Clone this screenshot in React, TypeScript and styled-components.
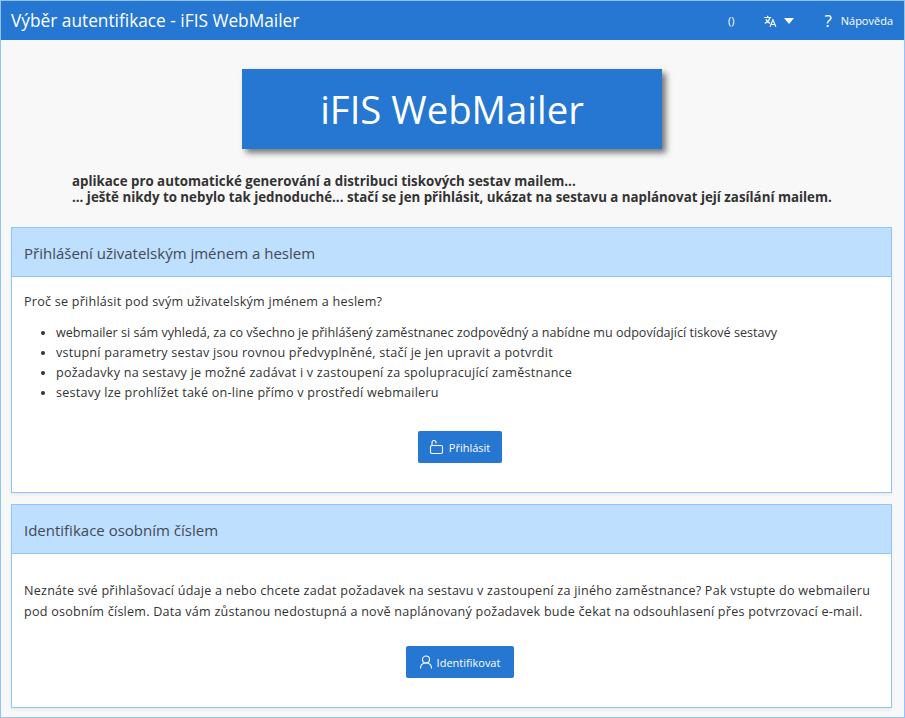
import * as React from "react";
import styled, { createGlobalStyle } from "styled-components";

const Global = createGlobalStyle`
  html, body {
    margin: 0;
    padding: 0;
    background: #f8f8f8;
  }
  * {
    box-sizing: border-box;
  }
`;

const Frame = styled.div`
  width: 905px;
  height: 718px;
  overflow: hidden;
  border: 1px solid #90c4fd;
  background: #f8f8f8;
  font-family: "Open Sans", "Noto Sans", sans-serif;
  color: #333;
`;

const TopBar = styled.div`
  height: 39px;
  background: #2577d2;
  color: #fff;
  display: flex;
  align-items: center;
  padding: 0 11px 0 10px;
`;

const BarTitle = styled.div`
  font-size: 17.3px;
  flex: 1;
`;

const BarItem = styled.div<{ $gap?: number; $inner?: number }>`
  display: flex;
  align-items: center;
  gap: ${(p) => p.$inner ?? 7}px;
  font-size: 11px;
  margin-left: ${(p) => p.$gap ?? 0}px;
`;

const HelpMark = styled.span`
  font-size: 17px;
  line-height: 20px;
`;

const Caret = styled.span`
  width: 0;
  height: 0;
  border-left: 5px solid transparent;
  border-right: 5px solid transparent;
  border-top: 6px solid #fff;
`;

const Banner = styled.div`
  width: 420px;
  height: 80px;
  margin: 29px 0 0 241px;
  background: #2577d2;
  color: #fff;
  font-size: 38.3px;
  display: flex;
  align-items: center;
  justify-content: center;
  box-shadow: 4px 4px 6px #777;
`;

const Slogan = styled.div`
  margin: 24px 0 0 71px;
  font-size: 13.3px;
  font-weight: 700;
  color: #333;
  white-space: nowrap;
`;

const SloganLine = styled.div`
  height: 16px;
  line-height: 16px;
`;

const Card = styled.section<{ $height: number; $top: number }>`
  margin: ${(p) => p.$top}px 12px 0 10px;
  height: ${(p) => p.$height}px;
  background: #fff;
  border: 1px solid #90c4fd;
  box-shadow: 0 2px 3px rgba(0, 0, 0, 0.06);
  display: flex;
  flex-direction: column;
`;

const CardHead = styled.h2`
  margin: 0;
  height: 49px;
  flex: none;
  background: #bfdffe;
  border-bottom: 1px solid #90c4fd;
  padding: 2px 12px 0;
  display: flex;
  align-items: center;
  font-size: 15px;
  font-weight: 400;
  color: #3f4a56;
`;

const CardBody = styled.div`
  padding: 15px 12px 0;
  font-size: 12.6px;
  line-height: 20px;
  letter-spacing: 0.23px;
`;

const Lead = styled.p`
  margin: 0 0 11px;
`;

const Points = styled.ul`
  margin: 0;
  padding: 0 0 0 32px;
`;

const Point = styled.li<{ $tight?: boolean }>`
  letter-spacing: ${(p) => (p.$tight ? 0 : 0.23)}px;
`;

const Paragraph = styled.p`
  margin: 11px 0 0;
  line-height: 21px;
`;

const Actions = styled.div<{ $top: number }>`
  display: flex;
  justify-content: center;
  padding-left: 16px;
  margin-top: ${(p) => p.$top}px;
  letter-spacing: 0;
`;

const Button = styled.button<{ $width: number }>`
  width: ${(p) => p.$width}px;
  height: 32px;
  border: 0;
  border-radius: 2px;
  background: #2577d2;
  color: #fff;
  font-family: inherit;
  font-size: 11px;
  display: flex;
  align-items: center;
  justify-content: center;
  gap: 4px;
  padding: 0;
`;

const TranslateIcon = () => (
  <svg width="14" height="14" viewBox="0 0 24 24" fill="none" stroke="#fff" strokeWidth="2">
    <path d="M2 6h12M8 3v3M12 6c-1 4-4 8-9 10M5 9c1 3 4 6 7 7" />
    <path d="M12 22l5-12 5 12M14 18h6" />
  </svg>
);

const LockIcon = () => (
  <svg width="16" height="16" viewBox="0 0 16 16" fill="none" stroke="#fff" strokeWidth="1.1">
    <rect x="1.500" y="6.500" width="12" height="8" rx="1.5" />
    <path d="M3 6.500V3.500a2 2 0 0 1 4 0v1" />
  </svg>
);

const UserIcon = () => (
  <svg width="14" height="14" viewBox="0 0 14 14" fill="none" stroke="#fff" strokeWidth="1.1">
    <circle cx="7" cy="4.500" r="3.500" />
    <path d="M1.500 13.500c0-3.200 2-5.500 5.500-5.500s5.500 2.300 5.500 5.500" />
  </svg>
);

export default function App() {
  return (
    <Frame>
      <Global />
      <TopBar>
        <BarTitle>Výběr autentifikace - iFIS WebMailer</BarTitle>
        <BarItem>()</BarItem>
        <BarItem $gap={29}>
          <TranslateIcon />
          <Caret />
        </BarItem>
        <BarItem $gap={30} $inner={9}>
          <HelpMark>?</HelpMark>
          Nápověda
        </BarItem>
      </TopBar>
      <Banner>iFIS WebMailer</Banner>
      <Slogan>
        <SloganLine>aplikace pro automatické generování a distribuci tiskových sestav mailem...</SloganLine>
        <SloganLine>... ještě nikdy to nebylo tak jednoduché... stačí se jen přihlásit, ukázat na sestavu a naplánovat její zasílání mailem.</SloganLine>
      </Slogan>
      <Card $top={22} $height={266}>
        <CardHead>Přihlášení uživatelským jménem a heslem</CardHead>
        <CardBody>
          <Lead>Proč se přihlásit pod svým uživatelským jménem a heslem?</Lead>
          <Points>
            <Point $tight>webmailer si sám vyhledá, za co všechno je přihlášený zaměstnanec zodpovědný a nabídne mu odpovídající tiskové sestavy</Point>
            <Point>vstupní parametry sestav jsou rovnou předvyplněné, stačí je jen upravit a potvrdit</Point>
            <Point>požadavky na sestavy je možné zadávat i v zastoupení za spolupracující zaměstnance</Point>
            <Point>sestavy lze prohlížet také on-line přímo v prostředí webmaileru</Point>
          </Points>
          <Actions $top={28}>
            <Button $width={84}>
              <LockIcon />
              Přihlásit
            </Button>
          </Actions>
        </CardBody>
      </Card>
      <Card $top={11} $height={204}>
        <CardHead>Identifikace osobním číslem</CardHead>
        <CardBody>
          <Paragraph>
            Neznáte své přihlašovací údaje a nebo chcete zadat požadavek na sestavu v zastoupení za jiného zaměstnance? Pak vstupte do webmaileru pod osobním číslem. Data vám zůstanou nedostupná a nově naplánovaný požadavek bude čekat na odsouhlasení přes potvrzovací e-mail.
          </Paragraph>
          <Actions $top={24}>
            <Button $width={108}>
              <UserIcon />
              Identifikovat
            </Button>
          </Actions>
        </CardBody>
      </Card>
    </Frame>
  );
}
